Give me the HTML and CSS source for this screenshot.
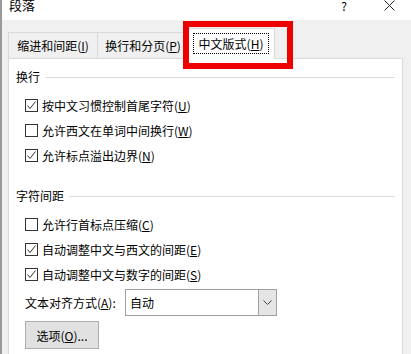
FILE: index.html
```html
<!DOCTYPE html>
<html lang="zh-CN">
<head>
    <meta charset="UTF-8">
    <title>段落</title>
    <link rel="stylesheet" href="styles.css">
</head>
<body>
    <div class="dialog">
        <!-- Barra de título -->
        <div class="titlebar">
            <span class="title">段落</span>
            <span class="help">?</span>
            <svg class="close" width="11" height="11" viewBox="0 0 11 11">
                <path d="M0.5 0.5 L10.5 10.5 M10.5 0.5 L0.5 10.5" stroke="#222" stroke-width="1" fill="none"/>
            </svg>
        </div>

        <div class="tabs">
            <div class="tab tab-first">缩进和间距(<u>I</u>)</div>
            <div class="tab tab-second">换行和分页(<u>P</u>)</div>
            <div class="tab active"><span class="focus">中文版式(<u>H</u>)</span></div>
        </div>

        <!-- Marca roja sobre la pestaña activa -->
        <div class="highlight"></div>

        <div class="panel">
            <div class="group-title"><span>换行</span><div class="rule"></div></div>
            <div class="rows first-rows">
                <div class="row">
                    <span class="check checked"><svg width="11" height="11" viewBox="0 0 11 11"><polyline points="1.5,5.5 4,8.5 9.5,1.5" stroke="#333" stroke-width="1" fill="none"/></svg></span>
                    <span>按中文习惯控制首尾字符(<u>U</u>)</span>
                </div>
                <div class="row">
                    <span class="check"></span>
                    <span>允许西文在单词中间换行(<u>W</u>)</span>
                </div>
                <div class="row">
                    <span class="check checked"><svg width="11" height="11" viewBox="0 0 11 11"><polyline points="1.5,5.5 4,8.5 9.5,1.5" stroke="#333" stroke-width="1" fill="none"/></svg></span>
                    <span>允许标点溢出边界(<u>N</u>)</span>
                </div>
            </div>

            <div class="group-title second"><span>字符间距</span><div class="rule"></div></div>
            <div class="rows">
                <div class="row">
                    <span class="check"></span>
                    <span>允许行首标点压缩(<u>C</u>)</span>
                </div>
                <div class="row">
                    <span class="check checked"><svg width="11" height="11" viewBox="0 0 11 11"><polyline points="1.5,5.5 4,8.5 9.5,1.5" stroke="#333" stroke-width="1" fill="none"/></svg></span>
                    <span>自动调整中文与西文的间距(<u>E</u>)</span>
                </div>
                <div class="row">
                    <span class="check checked"><svg width="11" height="11" viewBox="0 0 11 11"><polyline points="1.5,5.5 4,8.5 9.5,1.5" stroke="#333" stroke-width="1" fill="none"/></svg></span>
                    <span>自动调整中文与数字的间距(<u>S</u>)</span>
                </div>
            </div>

            <div class="align-row">
                <span class="align-label">文本对齐方式(<u>A</u>):</span>
                <div class="select">
                    <span class="select-value">自动</span>
                    <span class="select-arrow"><svg width="9" height="5" viewBox="0 0 9 5"><polyline points="0.5,0.5 4.5,4.5 8.5,0.5" stroke="#444" stroke-width="1" fill="none"/></svg></span>
                </div>
            </div>

            <div class="button">选项(<u>O</u>)...</div>
        </div>
    </div>
</body>
</html>
```

FILE: styles.css
```css
/* Estilos generales */
body {
    margin: 0;
    font-family: "Noto Sans CJK SC", "Noto Sans", sans-serif;
    font-size: 12px;
    color: #000000;
}
.dialog {
    position: relative;
    width: 411px;
    height: 354px;
    overflow: hidden;
    box-sizing: border-box;
    border-left: 2px solid #9a9a9a;
    background-color: #f0f0f0;
}
.titlebar {
    height: 20px;
    display: flex;
    align-items: flex-start;
    background-color: #ffffff;
}
.title {
    font-size: 13px;
    line-height: 13px;
    margin-left: 7px;
    margin-top: -2px;
}
.help {
    margin-left: auto;
    font-size: 12px;
    line-height: 12px;
    margin-top: 0px;
}
.close {
    margin-left: 37px;
    margin-right: 16px;
    margin-top: 0px;
}
.tabs {
    height: 38px;
    display: flex;
    align-items: flex-end;
    padding-left: 6px;
}
.tab {
    height: 26px;
    box-sizing: border-box;
    border: 1px solid #d9d9d9;
    border-bottom: none;
    display: flex;
    align-items: center;
    justify-content: center;
    line-height: 15px;
}
.tab-first {
    width: 90px;
}
.tab-second {
    width: 91px;
    border-left: none;
}
.tab.active {
    position: relative;
    z-index: 1;
    width: 88px;
    height: 31px;
    margin-left: -2px;
    margin-bottom: -1px;
    background-color: #ffffff;
    padding-bottom: 1px;
}
.focus {
    border: 1px dotted #000000;
    padding: 2px 5px;
}
.highlight {
    position: absolute;
    left: 181px;
    top: 21px;
    width: 98px;
    height: 36px;
    border: 6px solid #ee0000;
    z-index: 2;
}
.panel {
    margin-left: 6px;
    width: 395px;
    height: 400px;
    box-sizing: border-box;
    border: 1px solid #d9d9d9;
    background-color: #ffffff;
}
.group-title {
    display: flex;
    align-items: center;
    gap: 5px;
    height: 16px;
    line-height: 16px;
    margin-top: 10px;
    padding-left: 7px;
    padding-right: 7px;
}
.group-title.second {
    margin-top: 20px;
}
.rule {
    flex: 1;
    height: 1px;
    background-color: #dcdcdc;
}
.rows {
    margin-top: 8px;
    padding-left: 16px;
}
.row {
    height: 25px;
    display: flex;
    align-items: center;
    gap: 4px;
    line-height: 15px;
}
.check {
    width: 13px;
    height: 13px;
    box-sizing: border-box;
    border: 1px solid #333333;
    background-color: #ffffff;
    display: flex;
}
.align-row {
    margin-top: 2px;
    padding-left: 16px;
    display: flex;
    align-items: center;
}
.align-label {
    width: 100px;
    line-height: 15px;
}
.select {
    width: 152px;
    height: 27px;
    box-sizing: border-box;
    border: 1px solid #a0a0a0;
    display: flex;
    align-items: stretch;
}
.select-value {
    flex: 1;
    padding-left: 4px;
    display: flex;
    align-items: center;
}
.select-arrow {
    width: 17px;
    background-color: #e5e5e5;
    border-left: 1px solid #a0a0a0;
    display: flex;
    align-items: center;
    justify-content: center;
}
.button {
    margin-top: 5px;
    margin-left: 16px;
    width: 74px;
    height: 28px;
    box-sizing: border-box;
    border: 1px solid #adadad;
    background-color: #e1e1e1;
    display: flex;
    align-items: center;
    justify-content: center;
    line-height: 15px;
}
```
